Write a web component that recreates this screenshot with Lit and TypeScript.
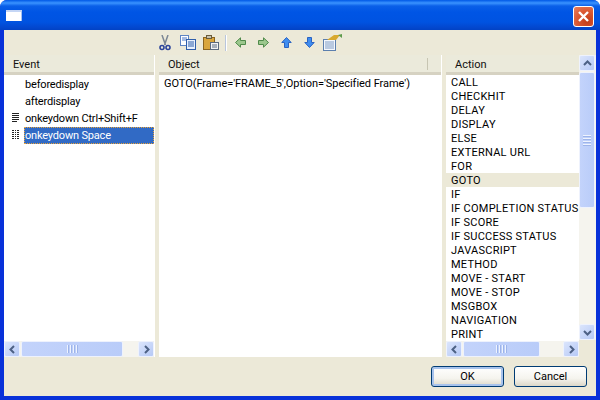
import { LitElement, html, css, svg } from "lit";
import { customElement } from "lit/decorators.js";

const ACTIONS = ["CALL","CHECKHIT","DELAY","DISPLAY","ELSE","EXTERNAL URL","FOR","GOTO","IF","IF COMPLETION STATUS","IF SCORE","IF SUCCESS STATUS","JAVASCRIPT","METHOD","MOVE - START","MOVE - STOP","MSGBOX","NAVIGATION","PRINT"];

const arrow = (points: string) => svg`<svg class="arrow" width="9" height="9" viewBox="0 0 9 9"><polyline points=${points} fill="none" stroke="#4d6185" stroke-width="2"/></svg>`;

@customElement("app-root")
export class AppRoot extends LitElement {
  static styles = css`
    :host { display: block; width: 600px; height: 400px; font-family: "Roboto", "Liberation Sans", sans-serif; font-size: 11px; color: #000; overflow: hidden; }
    .win { width: 600px; height: 400px; box-sizing: border-box; display: flex; flex-direction: column; background: #0831d9; border-radius: 7px 7px 0 0; overflow: hidden; }
    .title { height: 30px; flex: none; display: flex; align-items: center; justify-content: space-between; padding: 0 6px 0 6px; box-sizing: border-box;
      background: linear-gradient(180deg,#0058e6 0,#3a93ff 3px,#0a5fe8 6px,#0055e5 12px,#0053e1 22px,#0348d0 27px,#0242c4 30px); }
    .appicon { width: 15px; height: 9px; background: #fff; border-top: 2px solid #c5d6f5; border-right: 1px solid #a8c3f0; margin-top: 1px; }
    .close { width: 21px; height: 21px; box-sizing: border-box; border: 1px solid #fff; border-radius: 3px; margin-top: 3px; background: radial-gradient(circle at 70% 75%, #c23c18 0, #dc5a34 55%, #e8805f 100%); display: grid; place-items: center; }
    .body { flex: 1; min-height: 0; margin: 0 4px 4px 4px; background: #ece9d8; display: flex; flex-direction: column; }
    .toolbar { height: 25px; flex: none; display: flex; align-items: center; padding: 0 0 0 149px; box-sizing: border-box; }
    .tb { width: 23px; height: 20px; display: grid; place-items: center; flex: none; }
    .sep { width: 1px; height: 16px; background: #b9c6dc; border-right: 1px solid #fff; margin: 0 2px 0 3px; flex: none; }
    .panes { height: 302px; flex: none; display: flex; }
    .pane { display: flex; flex-direction: column; min-width: 0; }
    .p1 { width: 150px; }
    .p2 { width: 282px; }
    .p3 { width: 133px; }
    .split { flex: none; width: 5px; background: #ece9d8; border-left: 1px solid #fff; box-sizing: border-box; }
    .head { height: 20px; flex: none; box-sizing: border-box; background: #ebeadb; border-bottom: 3px solid #d6d2c2; display: flex; align-items: center; color: #111; position: relative; padding: 2px 0 0 9px; }
    .tick { position: absolute; right: 13px; top: 3px; width: 1px; height: 12px; background: #c7c5b2; }
    .list { flex: 1; min-height: 0; background: #fff; overflow: hidden; position: relative; }
    .events { padding-top: 1px; letter-spacing: -0.18px; }
    .ev { height: 17px; display: flex; align-items: center; position: relative; }
    .ev span { display: block; box-sizing: border-box; height: 17px; line-height: 17px; padding-left: 1px; margin-left: 20px; flex: 1; white-space: nowrap; }
    .ev .sel { background: #316ac5; color: #fff; outline: 1px dotted #e8a33a; outline-offset: -1px; }
    .mark { position: absolute; left: 8px; top: 3px; }
    .obj { padding: 2px 0 0 5px; line-height: 14px; white-space: nowrap; letter-spacing: -0.04px; }
    .act { height: 14px; line-height: 16px; padding-left: 5px; white-space: nowrap; letter-spacing: 0.25px; }
    .act.on { background: #ece9d8; }
    .hs { height: 16px; flex: none; background: #f5f4ee; display: flex; align-items: stretch; }
    .btn { width: 16px; height: 16px; flex: none; box-sizing: border-box; border: 1px solid #eef2fd; border-radius: 2px; background: linear-gradient(135deg,#dbe5fc,#b6c9f6); display: grid; place-items: center; }
    .thumb { box-sizing: border-box; border: 1px solid #eef2fd; border-radius: 2px; background: linear-gradient(90deg,#c3d3fb,#b9ccf9); display: flex; align-items: center; justify-content: center; gap: 1px; }
    .thumb i { display: block; background: #eef3fe; flex: none; }
    .hs .thumb i { width: 1px; height: 8px; box-shadow: 1px 0 0 #9db4ea; margin-right: 1px; }
    .hs .gap { flex: 1; }
    .p1 .hs .thumb { width: 102px; margin-left: 1px; }
    .p3 .hs .thumb { width: 77px; margin-left: 1px; }
    .vs { width: 17px; flex: none; height: 285px; background: #f5f4ee; display: flex; flex-direction: column; align-items: flex-start; }
    .vs .btn { width: 16px; height: 16px; }
    .vs .thumb { width: 16px; height: 136px; margin-top: 1px; flex-direction: column; }
    .vs .thumb i { width: 8px; height: 1px; box-shadow: 0 1px 0 #9db4ea; margin-bottom: 1px; }
    .vs .gap { flex: 1; }
    .vcol { flex: none; width: 17px; display: flex; flex-direction: column; height: 302px; }
    .foot { flex: 1; display: flex; justify-content: flex-end; align-items: flex-start; gap: 10px; padding: 9px 9px 0 0; }
    button { width: 73px; height: 21px; box-sizing: border-box; font: inherit; color: #000; padding: 0; border: 1px solid #003c74; border-radius: 3px; background: linear-gradient(180deg,#fff 0,#f5f4ee 60%,#dcd8c8 100%); }
    button.def { box-shadow: inset 0 0 0 2px #a8c3ec; }
  `;

  render() {
    return html`<div class="win">
      <div class="title">
        <div class="appicon"></div>
        <div class="close"><svg width="13" height="13" viewBox="0 0 13 13"><path d="M2 2 L11 11 M11 2 L2 11" stroke="#fff" stroke-width="2.4" fill="none"/></svg></div>
      </div>
      <div class="body">
        <div class="toolbar">
          <div class="tb"><svg width="12" height="16" viewBox="0 0 12 16"><path d="M3 0 L6.5 10 M9 0 L5.5 10" stroke="#7c8794" stroke-width="1.5" fill="none"/><circle cx="3" cy="12.5" r="2" fill="none" stroke="#2c459b" stroke-width="1.6"/><circle cx="9" cy="12.5" r="2" fill="none" stroke="#2c459b" stroke-width="1.6"/></svg></div>
          <div class="tb"><svg width="16" height="15" viewBox="0 0 16 15"><rect x=".5" y=".5" width="8" height="10" fill="#fff" stroke="#5e84c4"/><path d="M2 3h5M2 5h5" stroke="#4a77c8"/><rect x="6.5" y="4.5" width="9" height="10" fill="#e8f0fd" stroke="#2f5eaa"/><path d="M8 7h6M8 9h6M8 11h6" stroke="#2f5eaa"/></svg></div>
          <div class="tb"><svg width="16" height="15" viewBox="0 0 16 15"><rect x=".5" y="2.5" width="11" height="12" fill="#d9a53c" stroke="#8a6420"/><rect x="3.5" y=".5" width="5" height="3" fill="#c7c1ad" stroke="#6a5c3a"/><rect x="7.5" y="7.5" width="8" height="7" fill="#f3f3f3" stroke="#5b6a80"/><path d="M9 10h5M9 12h5" stroke="#5b6a80"/></svg></div>
          <div class="sep"></div>
          <div class="tb"><svg width="11" height="11" viewBox="0 0 11 11"><path d="M.5 5.5 L5.5 .8 V3.5 H10.5 V7.5 H5.5 V10.2 Z" fill="#9cc78d" stroke="#4f8a4a"/></svg></div>
          <div class="tb"><svg width="11" height="11" viewBox="0 0 11 11"><path d="M10.5 5.5 L5.5 .8 V3.5 H.5 V7.5 H5.5 V10.2 Z" fill="#9cc78d" stroke="#4f8a4a"/></svg></div>
          <div class="tb"><svg width="11" height="11" viewBox="0 0 11 11"><path d="M5.5 .5 L10.2 5.5 H7.5 V10.5 H3.5 V5.5 H.8 Z" fill="#3f8df0" stroke="#2a63c2"/></svg></div>
          <div class="tb"><svg width="11" height="11" viewBox="0 0 11 11"><path d="M5.5 10.5 L10.2 5.5 H7.5 V.5 H3.5 V5.5 H.8 Z" fill="#3f8df0" stroke="#2a63c2"/></svg></div>
          <div class="tb"><svg width="19" height="17" viewBox="0 0 19 17"><rect x=".5" y="5.5" width="12" height="11" fill="#f4f7fc" stroke="#5b7fae"/><path d="M2 8h9M2 10h9M2 12h9M2 14h9" stroke="#7f9cc4"/><path d="M4 6 L11 1 L17 1 L13 6 Z" fill="#d8a92f"/><path d="M15 1 L19 0 V4 Z" fill="#5e9b4c"/></svg></div>
        </div>
        <div class="panes">
          <div class="pane p1">
            <div class="head">Event</div>
            <div class="list events">
              <div class="ev"><span>beforedisplay</span></div>
              <div class="ev"><span>afterdisplay</span></div>
              <div class="ev"><svg class="mark" width="7" height="10" viewBox="0 0 7 10"><path d="M0 .5h7M0 2.5h7M0 4.5h7M0 6.5h7M0 8.5h5" stroke="#222"/></svg><span>onkeydown Ctrl+Shift+F</span></div>
              <div class="ev"><svg class="mark" width="7" height="10" viewBox="0 0 7 10"><path d="M0 .5h7M0 2.5h7M0 4.5h7M0 6.5h7M0 8.5h7" stroke="#222"/><path d="M2.5 0v10M4.5 0v10" stroke="#fff"/></svg><span class="sel">onkeydown Space</span></div>
            </div>
            <div class="hs">
              <div class="btn">${arrow("6,1 2.5,4.5 6,8")}</div>
              <div class="thumb"><i></i><i></i><i></i><i></i></div>
              <div class="gap"></div>
              <div class="btn">${arrow("3,1 6.5,4.5 3,8")}</div>
            </div>
          </div>
          <div class="split"></div>
          <div class="pane p2">
            <div class="head">Object<div class="tick"></div></div>
            <div class="list"><div class="obj">GOTO(Frame='FRAME_5',Option='Specified Frame')</div></div>
          </div>
          <div class="split"></div>
          <div class="pane p3">
            <div class="head">Action</div>
            <div class="list">
              ${ACTIONS.map((a) => html`<div class="act ${a === "GOTO" ? "on" : ""}">${a}</div>`)}
            </div>
            <div class="hs">
              <div class="btn">${arrow("6,1 2.5,4.5 6,8")}</div>
              <div class="thumb"><i></i><i></i><i></i><i></i></div>
              <div class="gap"></div>
              <div class="btn">${arrow("3,1 6.5,4.5 3,8")}</div>
            </div>
          </div>
          <div class="vcol">
            <div class="vs">
              <div class="btn">${arrow("1,6 4.5,2.5 8,6")}</div>
              <div class="thumb"><i></i><i></i><i></i><i></i></div>
              <div class="gap"></div>
              <div class="btn">${arrow("1,3 4.5,6.5 8,3")}</div>
            </div>
          </div>
        </div>
        <div class="foot">
          <button class="def">OK</button>
          <button>Cancel</button>
        </div>
      </div>
    </div>`;
  }
}
